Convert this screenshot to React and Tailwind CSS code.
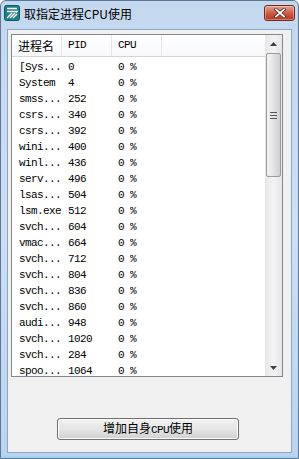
import React from 'react';

const rows = [
  ['[Sys...', '0'],
  ['System', '4'],
  ['smss...', '252'],
  ['csrs...', '340'],
  ['csrs...', '392'],
  ['wini...', '400'],
  ['winl...', '436'],
  ['serv...', '496'],
  ['lsas...', '504'],
  ['lsm.exe', '512'],
  ['svch...', '604'],
  ['vmac...', '664'],
  ['svch...', '712'],
  ['svch...', '804'],
  ['svch...', '836'],
  ['svch...', '860'],
  ['audi...', '948'],
  ['svch...', '1020'],
  ['svch...', '284'],
  ['spoo...', '1064'],
];

const mono = "font-['Liberation_Mono',monospace] text-[11px] tracking-[-0.6px]";
const cjk = "font-['Noto_Sans_CJK_SC',sans-serif] text-[12px]";

const AppIcon = () => (
  <svg width="16" height="16" viewBox="0 0 16 16">
    <rect x="0.5" y="0.5" width="15" height="15" rx="2" fill="#1d7f86" stroke="#0f5a60" />
    <path d="M3 3.5h10" stroke="#fff" strokeWidth="1.6" />
    <path d="M3 6.5h10l-1 1" stroke="#fff" strokeWidth="1.4" fill="none" />
    <path d="M3 13l5-5M6 13l5-5M9 13l4-4" stroke="#fff" strokeWidth="1.4" />
  </svg>
);

const CloseButton = () => (
  <div className="w-[31px] h-[16px] rounded-[3px] border border-[#6e2a22] bg-gradient-to-b from-[#e4a293] via-[#cf5b45] to-[#b8361f] flex items-center justify-center shadow-[inset_0_0_0_1px_rgba(255,255,255,0.35)]">
    <svg width="12" height="10" viewBox="0 0 12 10">
      <path d="M2 1.5l8 7M10 1.5l-8 7" stroke="#5a1f18" strokeWidth="3.2" strokeLinecap="square" />
      <path d="M2 1.5l8 7M10 1.5l-8 7" stroke="#fff" strokeWidth="1.8" strokeLinecap="square" />
    </svg>
  </div>
);

const Arrow = ({ up }) => (
  <svg width="7" height="4" viewBox="0 0 7 4">
    <path d={up ? 'M0 4L3.5 0L7 4Z' : 'M0 0L3.5 4L7 0Z'} fill="#404040" />
  </svg>
);

const Scrollbar = () => (
  <div className="w-[17px] h-full flex flex-col bg-gradient-to-r from-[#e6e6e6] via-[#f3f3f3] to-[#e6e6e6]">
    <div className="h-[17px] flex items-center justify-center">
      <Arrow up />
    </div>
    <div className="flex-1 flex flex-col px-px">
      <div className="mt-px h-[124px] rounded-[2px] border border-[#9a9a9a] bg-gradient-to-r from-[#f4f4f4] via-[#e4e4e4] to-[#cfcfcf] flex flex-col items-center justify-center gap-[2px]">
        <div className="w-[7px] h-px bg-[#555]" />
        <div className="w-[7px] h-px bg-[#555]" />
        <div className="w-[7px] h-px bg-[#555]" />
      </div>
    </div>
    <div className="h-[17px] flex items-center justify-center">
      <Arrow />
    </div>
  </div>
);

const App = () => {
  return (
    <div className="w-[299px] h-[459px] flex flex-col border border-[#5d7897] rounded-t-[6px] bg-gradient-to-b from-[#c3d7ef] via-[#cddff3] to-[#b9d3ef] overflow-hidden">
      <div className="h-[28px] flex items-start pt-[4px] pl-[3px] pr-[3px]">
        <AppIcon />
        <span className={`${cjk} ml-[4px] mt-[1px] leading-[16px] text-black`}>取指定进程CPU使用</span>
        <div className="ml-auto">
          <CloseButton />
        </div>
      </div>

      <div className="mx-[6px] h-[424px] border border-[#8ea6c3] bg-[#f0f0f0] flex flex-col">
        <div className="ml-[3px] mt-[4px] w-[272px] h-[343px] border border-[#828790] bg-white flex">
          <div className="flex-1 overflow-hidden">
            <div className="h-[22px] flex border-b border-[#d5d5d5] bg-gradient-to-b from-white to-[#f7f8fa]">
              <div className={`w-[50px] border-r border-[#e5e5e5] pl-[6px] flex items-center ${cjk} text-black`}>进程名</div>
              <div className={`w-[50px] border-r border-[#e5e5e5] pl-[6px] flex items-center ${mono} text-black`}>PID</div>
              <div className={`w-[50px] border-r border-[#e5e5e5] pl-[6px] flex items-center ${mono} text-black`}>CPU</div>
            </div>
            <div className="pt-[2px]">
              {rows.map(([name, pid], i) => (
                <div key={i} className={`h-[16px] flex items-center ${mono} text-black`}>
                  <span className="w-[50px] pl-[7px] whitespace-nowrap overflow-hidden">{name}</span>
                  <span className="w-[50px] pl-[6px]">{pid}</span>
                  <span className="w-[50px] pl-[6px] whitespace-pre">0 %</span>
                </div>
              ))}
            </div>
          </div>
          <Scrollbar />
        </div>

        <div className="mt-[41px] ml-[49px] w-[182px] h-[22px] rounded-[3px] border border-[#707070] bg-gradient-to-b from-[#f2f2f2] via-[#e6e6e6] to-[#d0d0d0] flex items-center justify-center shadow-[inset_0_0_0_1px_#fcfcfc]">
          <span className={`${cjk} text-black leading-none`}>
            增加自身<span className={mono}>CPU</span>使用
          </span>
        </div>
      </div>

      <div className="flex-1 border-b-2 border-[#a3d3ef]" />
    </div>
  );
};

export default App;
